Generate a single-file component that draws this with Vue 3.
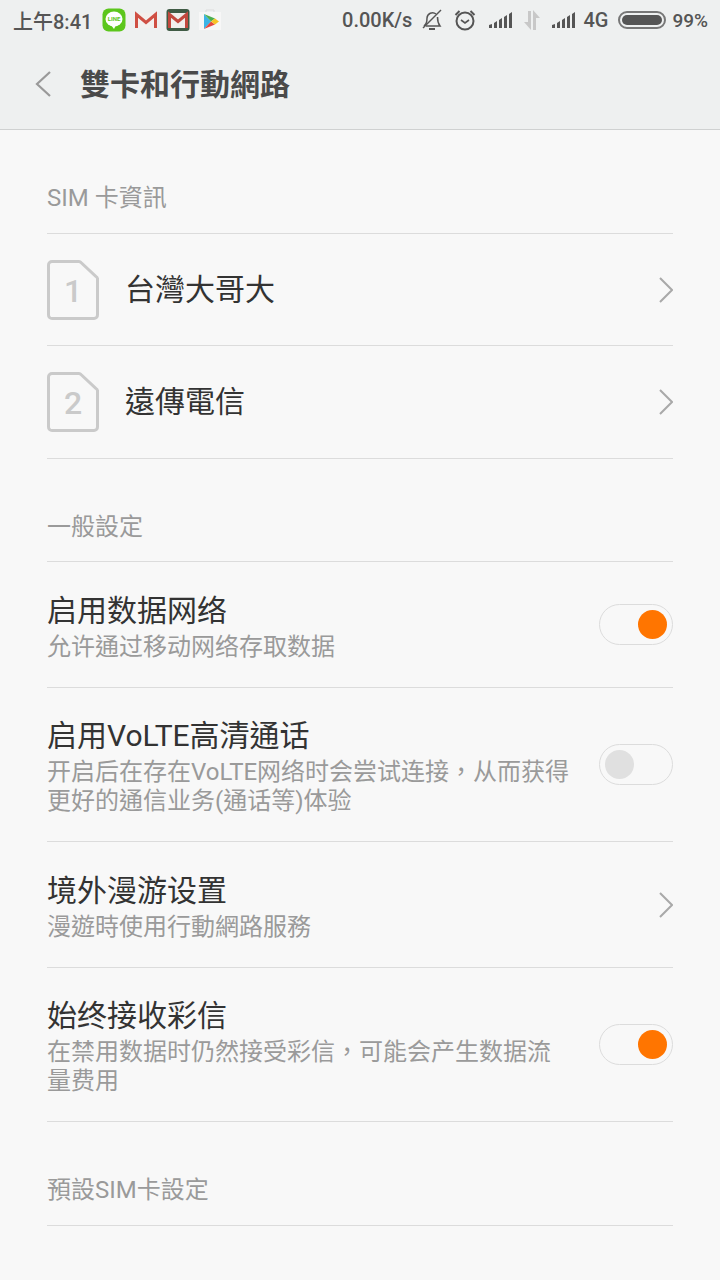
<template>
  <div class="page">
    <div class="top">
      <div class="status">
        <span class="time">上午8:41</span>
        <div class="notify">
          <svg width="24" height="24" viewBox="0 0 24 24"><rect x="0.500" y="0.500" width="23" height="23" rx="6" fill="#5cc61c"/><ellipse cx="12" cy="11" rx="8.500" ry="7.500" fill="#fff"/><path d="M9 17l3 4 2-4z" fill="#fff"/><text x="12" y="13" font-size="6" font-weight="700" text-anchor="middle" fill="#5cc61c" font-family="Roboto, sans-serif">LINE</text></svg>
          <svg width="24" height="24" viewBox="0 0 24 24"><path d="M1 5h22v15H1z" fill="#f3f0ee"/><path d="M2.500 20V6.500l9.500 8 9.500-8V20" fill="none" stroke="#cf4f43" stroke-width="3"/></svg>
          <svg width="24" height="26" viewBox="0 0 24 26"><rect x="0.500" y="2" width="23" height="22" rx="3" fill="#3f5b45"/><rect x="2.500" y="6" width="19" height="15" fill="#f1efec"/><path d="M3.500 21V7.500l8.500 7 8.500-7V21" fill="none" stroke="#c2493e" stroke-width="3"/></svg>
          <svg width="24" height="24" viewBox="0 0 24 24"><path d="M1 4h22v18H1z" fill="#f7f7f7"/><path d="M8 4V2h8v2" fill="none" stroke="#ddd"/><path d="M6 6l7 7.500L6 21z" fill="#3db4e6"/><path d="M6 6l11 4.500-4 3z" fill="#4caf50"/><path d="M6 21l11-4.500-4-3z" fill="#e4483f"/><path d="M17 10.500l4 3-4 3-4-3z" fill="#f7c325"/></svg>
        </div>
        <div class="indicators">
          <span class="speed">0.00K/s</span>
          <svg class="ind-bell" width="22" height="24" viewBox="0 0 22 24" fill="none" stroke="#555" stroke-width="1.500"><path d="M3 18c2-2 3-3 3-8a5.500 5.500 0 0 1 9-4M16.500 9c0 5 1 7 2.500 9H5"/><path d="M20 2L2 20"/><path d="M8 21h6" stroke-width="2"/></svg>
          <svg class="ind-alarm" width="22" height="24" viewBox="0 0 22 24" fill="none" stroke="#555" stroke-width="2"><circle cx="11" cy="13" r="8.500"/><path d="M7 12l4 3 4-3" stroke-width="1.600"/><path d="M1.500 7l4-4M20.500 7l-4-4"/></svg>
          <svg class="ind-sig" width="25" height="20" viewBox="0 0 25 20" fill="#555"><path d="M1 15l3-1v4H1zM6 13l3-2v7H6zM11 10l3-2v10h-3zM16 7l3-2v13h-3zM21 4l3-2v16h-3z"/></svg>
          <svg class="ind-data" width="20" height="22" viewBox="0 0 20 22" fill="#c8c8c8"><path d="M6 2h3v19L2 13h4zM11 1l7 8h-4v12h-3z"/></svg>
          <svg class="ind-sig2" width="25" height="20" viewBox="0 0 25 20" fill="#555"><path d="M1 15l3-1v4H1zM6 13l3-2v7H6zM11 10l3-2v10h-3zM16 7l3-2v13h-3zM21 4l3-2v16h-3z"/></svg>
          <span class="net">4G</span>
          <div class="battery"><div class="battery-fill"></div></div>
          <span class="pct">99%</span>
        </div>
      </div>
      <div class="header">
        <svg class="back" width="18" height="28" viewBox="0 0 18 28" fill="none" stroke="#999" stroke-width="2.200"><path d="M16 2L3 14l13 12"/></svg>
        <h1 class="title">雙卡和行動網路</h1>
      </div>
    </div>

    <div class="content">
      <div class="section-label">SIM 卡資訊</div>
      <div class="sim-list">
        <div v-for="sim in sims" :key="sim.n" class="row sim-row">
          <div class="sim-icon">
            <svg width="52" height="60" viewBox="0 0 52 60" fill="none" stroke="#cacaca" stroke-width="3"><path d="M5 1.500h27a3 3 0 0 1 2 1l15 14a3 3 0 0 1 1.500 2V55a3.500 3.500 0 0 1-3.500 3.500H5A3.500 3.500 0 0 1 1.500 55V5A3.500 3.500 0 0 1 5 1.500z"/></svg>
            <span class="sim-num">{{ sim.n }}</span>
          </div>
          <span class="row-title grow">{{ sim.name }}</span>
          <svg class="chev" width="16" height="26" viewBox="0 0 16 26" fill="none" stroke="#a9a9a9" stroke-width="2"><path d="M3 1l12 12L3 25"/></svg>
        </div>
      </div>

      <div class="section-label second">一般設定</div>
      <div class="item-list">
        <div v-for="item in items" :key="item.title" class="row item-row">
          <div class="item-text grow">
            <div class="row-title">{{ item.title }}</div>
            <div class="row-sub">{{ item.sub }}</div>
          </div>
          <svg v-if="item.kind === 'link'" class="chev" width="16" height="26" viewBox="0 0 16 26" fill="none" stroke="#a9a9a9" stroke-width="2"><path d="M3 1l12 12L3 25"/></svg>
          <div v-else class="switch" :class="{ on: item.kind === 'on' }"><div class="knob"></div></div>
        </div>
      </div>

      <div class="section-label">預設SIM卡設定</div>
      <div class="row"></div>
    </div>
  </div>
</template>

<script setup>
const sims = [
  { n: 1, name: '台灣大哥大' },
  { n: 2, name: '遠傳電信' }
]

const items = [
  { title: '启用数据网络', sub: '允许通过移动网络存取数据', kind: 'on' },
  { title: '启用VoLTE高清通话', sub: '开启后在存在VoLTE网络时会尝试连接，从而获得更好的通信业务(通话等)体验', kind: 'off' },
  { title: '境外漫游设置', sub: '漫遊時使用行動網路服務', kind: 'link' },
  { title: '始终接收彩信', sub: '在禁用数据时仍然接受彩信，可能会产生数据流量费用', kind: 'on' }
]
</script>

<style>
html, body {
  margin: 0;
  background: #f8f8f8;
}
</style>

<style scoped>
.page {
  width: 720px;
  height: 1280px;
  overflow: hidden;
  background: #f8f8f8;
  font-family: Roboto, "Noto Sans CJK TC", sans-serif;
}

.top {
  background: #eef0f0;
  border-bottom: 1px solid #cfd1d1;
  height: 129px;
}

.status {
  height: 40px;
  display: flex;
  align-items: center;
  padding: 0 12px 0 13px;
  color: #555;
  font-size: 20px;
  font-weight: 500;
}

.time {
  margin-right: 10px;
}

.notify {
  display: flex;
  align-items: center;
  gap: 8px;
}

.indicators {
  margin-left: auto;
  display: flex;
  align-items: center;
}

.speed {
  margin-right: 9px;
}

.ind-bell {
  margin-right: 11px;
}

.ind-alarm {
  margin-right: 12px;
}

.ind-sig {
  margin-right: 9px;
}

.ind-data {
  margin-right: 9px;
}

.ind-sig2 {
  margin-right: 7px;
}

.battery {
  margin: 0 6px 0 10px;
  width: 48px;
  height: 18px;
  box-sizing: border-box;
  border: 2px solid #777;
  border-radius: 9px;
  padding: 2px;
}

.battery-fill {
  height: 100%;
  background: #555;
  border-radius: 5px;
}

.pct {
  font-size: 19px;
}

.header {
  height: 89px;
  display: flex;
  align-items: center;
  padding-left: 34px;
  padding-bottom: 6px;
  box-sizing: border-box;
}

.back {
  margin-top: 4px;
  margin-right: 28px;
}

.title {
  margin: 0;
  font-size: 30px;
  font-weight: 700;
  color: #4a4a4a;
}

.content {
  padding: 0 47px;
}

.section-label {
  height: 103px;
  box-sizing: border-box;
  padding-top: 50px;
  line-height: 36px;
  font-size: 24px;
  color: #9a9a9a;
}

.section-label.second {
  height: 102px;
}

.sim-list,
.item-list {
  border-bottom: 1px solid #dcdcdc;
}

.row {
  display: flex;
  align-items: center;
  border-top: 1px solid #dcdcdc;
  box-sizing: border-box;
}

.sim-row {
  height: 112px;
}

.sim-row:last-child {
  height: 113px;
}

.sim-icon {
  position: relative;
  width: 52px;
  height: 60px;
  margin-right: 26px;
}

.sim-icon svg {
  display: block;
}

.sim-num {
  position: absolute;
  left: 0;
  right: 0;
  top: 12px;
  text-align: center;
  font-size: 32px;
  font-weight: 500;
  line-height: 38px;
  color: #cacaca;
}

.grow {
  flex: 1;
  min-width: 0;
}

.row-title {
  font-size: 30px;
  line-height: 40px;
  color: #333;
}

.row-sub {
  font-size: 24px;
  line-height: 29px;
  margin-top: 2px;
  color: #9a9a9a;
}

.item-row {
  min-height: 126px;
}

.item-text {
  padding: 28px 29px 25px 0;
}

.switch {
  width: 74px;
  height: 41px;
  box-sizing: border-box;
  border: 1px solid #dcdcdc;
  border-radius: 21px;
  padding: 5px;
  flex: none;
  display: flex;
}

.switch.on {
  justify-content: flex-end;
}

.knob {
  width: 29px;
  height: 29px;
  border-radius: 50%;
  background: #e0e0e0;
}

.switch.on .knob {
  background: #ff7500;
}

.chev {
  flex: none;
}
</style>
